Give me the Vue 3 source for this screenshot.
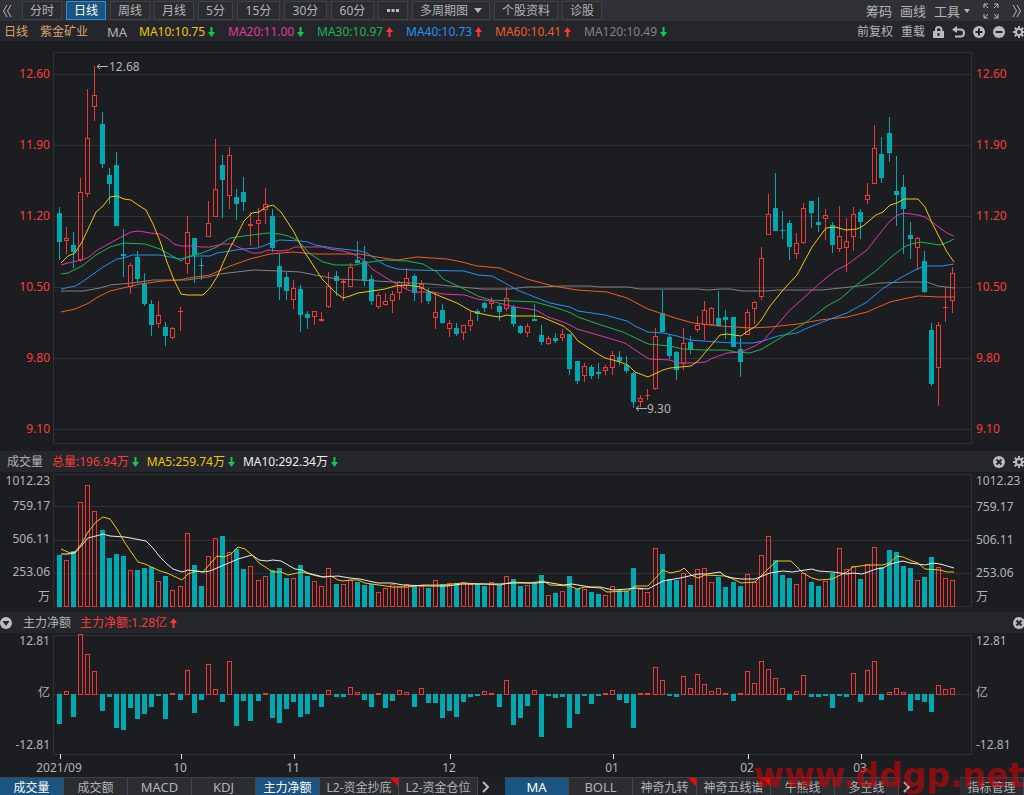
<script setup>
const periods = ['分时', '日线', '周线', '月线', '5分', '15分', '30分', '60分']

const averages = [
  { text: 'MA10:10.75', tone: 'yellow', up: false },
  { text: 'MA20:11.00', tone: 'pink', up: false },
  { text: 'MA30:10.97', tone: 'green', up: true },
  { text: 'MA40:10.73', tone: 'blue', up: true },
  { text: 'MA60:10.41', tone: 'orange', up: true },
  { text: 'MA120:10.49', tone: 'dim', up: false },
]

const volumeLegend = [
  { text: '总量:196.94万', tone: 'red', up: false },
  { text: 'MA5:259.74万', tone: 'yellow', up: false },
  { text: 'MA10:292.34万', tone: 'white', up: false },
]

const priceTicks = ['12.60', '11.90', '11.20', '10.50', '9.80', '9.10']
const priceGrid = [74, 145, 216, 287, 358, 429]
const volumeTicks = ['1012.23', '759.17', '506.11', '253.06', '万']
const volumeGrid = [506, 540, 573]
const flowTicks = ['12.81', '亿', '-12.81']

const months = [
  { text: '2021/09', x: 60, at: 59 },
  { text: '10', x: 181, at: 180 },
  { text: '11', x: 294, at: 293 },
  { text: '12', x: 450, at: 449 },
  { text: '01', x: 613, at: 612 },
  { text: '02', x: 748, at: 747 },
  { text: '03', x: 861, at: 860 },
]

const indicatorTabs = [
  { text: '成交量', on: true },
  { text: '成交额' },
  { text: 'MACD', latin: true },
  { text: 'KDJ', latin: true },
  { text: '主力净额', on: true },
  { text: 'L2-资金抄底', wide: true, hot: true },
  { text: 'L2-资金仓位', wide: true },
]
const overlayTabs = [
  { text: 'MA', latin: true, on: true },
  { text: 'BOLL', latin: true },
  { text: '神奇九转', hot: true },
  { text: '神奇五线谱', mid: true, hot: true },
  { text: '牛熊线' },
  { text: '多空线' },
]

// Each row: rising flag, then high, body top, body bottom, low
const candleRows = [
  [0,207,213,242,260],[1,227,238,241,254],[0,232,245,252,268],[1,178,192,260,262],[1,89,138,194,197],
  [1,66,95,107,121],[0,112,124,164,168],[0,168,175,184,204],[0,152,165,226,226],[0,229,254,256,277],
  [1,263,265,287,294],[0,251,257,279,283],[0,273,284,304,306],[0,300,304,325,336],[1,301,315,324,328],
  [0,322,327,336,346],[1,327,328,338,339],[1,307,311,312,331],[1,216,232,264,274],[0,238,238,255,283],
  [0,258,265,266,280],[1,201,223,237,237],[1,139,189,217,217],[0,155,165,180,218],[1,147,155,196,209],
  [0,189,197,204,220],[0,177,192,202,211],[1,212,224,226,246],[1,208,220,224,247],[1,188,204,210,224],
  [0,209,216,248,252],[0,254,266,287,300],[0,272,277,291,300],[1,280,288,300,309],[0,285,289,315,332],
  [0,311,314,318,329],[1,311,311,317,325],[1,312,319,321,322],[1,272,286,307,308],[0,271,276,281,296],
  [1,279,281,283,301],[1,263,267,287,287],[0,241,260,263,263],[0,246,261,281,286],[0,275,279,301,305],
  [1,293,295,307,309],[1,293,301,305,306],[1,291,294,301,313],[1,281,282,293,300],[1,268,278,286,289],
  [0,274,276,293,301],[1,280,284,289,303],[0,288,292,301,304],[1,293,312,318,329],[0,304,310,323,324],
  [1,320,323,329,337],[0,323,328,334,336],[1,325,325,333,340],[1,310,320,326,331],[0,309,311,314,321],
  [0,302,303,308,312],[1,297,301,304,309],[0,304,306,312,321],[1,287,298,309,311],[0,305,307,324,327],
  [0,325,326,333,334],[1,323,326,333,337],[0,304,319,321,321],[0,325,335,342,345],[1,336,338,344,345],
  [0,333,338,341,343],[1,329,334,338,341],[0,334,334,369,375],[0,361,361,381,384],[1,363,366,376,382],
  [0,365,367,376,379],[0,363,372,374,379],[1,365,367,371,375],[1,351,355,368,375],[0,351,357,361,365],
  [0,356,365,371,373],[0,372,373,402,408],[1,395,398,402,407],[1,389,395,396,400],[1,328,336,389,390],
  [0,290,313,332,332],[0,335,337,356,359],[0,351,352,370,380],[1,328,343,364,370],[0,336,342,350,354],
  [1,316,325,330,332],[1,301,310,325,340],[1,307,308,325,326],[0,291,318,326,327],[0,310,317,320,339],
  [0,317,317,347,347],[0,338,349,362,377],[1,309,312,335,335],[1,301,302,309,324],[1,247,258,297,300],
  [1,194,214,235,235],[0,173,208,231,231],[0,211,230,231,239],[0,220,223,247,260],[1,233,243,254,259],
  [1,203,208,243,244],[0,201,201,213,228],[0,197,222,225,232],[1,209,215,219,240],[0,222,225,245,253],
  [1,206,236,249,252],[1,218,241,248,272],[1,207,214,237,251],[0,209,212,222,239],[1,183,195,200,204],
  [1,125,148,184,184],[0,137,154,178,183],[0,117,133,153,162],[0,156,191,195,226],[0,175,187,209,254],
  [0,222,235,239,259],[1,237,238,248,270],[0,251,261,292,293],[0,323,330,384,386],[1,322,325,368,406],
  [1,287,307,308,322],[1,267,273,301,313],
]

const volumeTops = [
  555,560,551,502,485,511,530,558,554,556,570,570,568,567,581,576,590,586,533,565,586,556,538,536,552,
  549,569,566,580,576,570,568,578,578,565,576,581,586,568,584,584,580,582,585,584,592,588,584,586,584,
  586,586,588,580,584,583,583,582,584,584,586,582,585,576,579,586,585,583,575,595,593,591,576,589,589,
  592,594,595,586,590,591,568,589,592,548,554,579,580,573,585,569,568,582,577,587,582,586,574,582,555,
  536,560,575,578,584,573,582,586,581,573,548,569,566,579,564,547,567,550,552,566,568,580,577,557,567,
  578,580,
]

const flowEnds = [
  724,691,717,634,654,671,711,697,728,730,708,719,714,707,696,719,693,700,670,713,700,664,689,702,661,
  726,701,721,701,693,718,723,709,702,717,714,700,707,690,697,697,687,692,700,707,693,708,701,690,692,
  707,688,703,703,718,711,717,702,697,696,691,693,707,680,725,718,706,690,737,696,698,697,728,714,696,
  704,696,693,690,700,703,728,693,693,667,680,696,697,676,688,674,684,691,688,693,701,693,671,683,661,
  669,678,688,700,691,675,697,697,696,708,696,697,673,702,670,661,700,692,688,692,711,700,702,712,685,
  689,688,
]

const slot = (i) => Math.round(57 + i * 7.09)

const candles = candleRows.map(([up, high, top, bottom, low], i) => ({ up: !!up, high, top, bottom, low, x: slot(i) }))
const volumes = volumeTops.map((top, i) => ({ up: candles[i].up, top, x: slot(i) }))
const flows = flowEnds.map((end, i) => ({ up: end < 694, end, x: slot(i) }))

const priceLines = [
  { tone: 'dim', points: '61,291 83,291 100,288 110,285 132,283 153,280 187,280 208,277 220,274 253,270 280,271 300,272 320,276 337,279 360,280 393,282 430,284 460,287 483,289 510,289 527,287 540,287 562,286 590,286 600,287 628,287 640,289 698,289 707,290 720,289 730,289 742,291 767,291 777,290 822,290 850,287 880,283 907,282 927,282 938,286 954,288' },
  { tone: 'orange', points: '61,312 75,309 89,303 96,298 110,291 123,288 140,284 163,281 180,280 188,278 210,275 230,266 250,259 270,254 293,252 315,254 360,254 377,257 397,260 417,257 447,259 462,262 477,266 500,268 507,271 527,279 553,286 577,290 607,292 627,298 648,309 675,318 693,323 720,326 750,328 770,327 798,324 820,320 847,317 867,312 890,302 903,299 918,296 940,297 954,297' },
  { tone: 'blue', points: '61,289 75,286 82,282 103,267 117,259 124,258 132,255 160,255 180,259 193,256 210,256 217,253 243,249 258,248 273,242 280,240 300,241 308,242 315,245 333,248 360,251 367,253 380,262 387,266 398,269 413,270 464,271 478,275 492,276 505,283 517,290 550,303 570,307 578,311 605,315 627,321 635,326 648,332 663,333 677,336 690,340 703,341 718,342 733,343 753,343 763,341 778,336 790,334 797,333 805,329 833,318 847,313 867,302 882,289 900,278 917,269 925,266 942,266 954,264' },
  { tone: 'green', points: '61,274 68,273 82,266 96,255 110,247 124,243 145,244 160,249 167,253 181,261 187,257 202,253 217,247 230,238 244,236 268,233 280,234 288,236 297,240 302,245 310,254 323,262 335,265 355,265 363,263 385,260 407,261 423,264 437,272 443,279 460,287 478,296 490,300 513,301 535,302 550,306 563,310 571,313 578,317 598,324 623,332 648,344 670,346 683,349 703,350 727,350 735,352 750,353 762,349 777,340 805,323 827,306 840,299 855,286 877,270 890,258 904,247 911,244 920,242 940,245 948,242 954,239' },
  { tone: 'pink', points: '61,265 68,263 82,260 89,257 96,251 103,247 112,242 123,236 131,232 139,231 150,233 160,234 167,238 174,244 181,246 190,246 203,247 210,247 223,244 232,244 238,247 252,253 260,253 268,250 280,251 288,250 295,247 313,247 323,247 330,249 343,251 353,254 365,261 372,269 393,282 408,290 415,292 433,292 443,294 465,295 477,299 490,301 507,305 515,307 536,310 548,317 563,322 570,325 577,329 598,335 625,343 635,350 649,359 670,360 677,363 693,363 705,362 713,358 727,353 742,352 748,349 755,346 763,341 777,325 790,310 798,303 820,283 835,271 848,264 867,250 877,237 890,221 898,215 904,213 918,215 925,217 947,233 954,236' },
  { tone: 'yellow', points: '61,263 68,256 75,253 82,242 89,227 96,212 103,206 110,197 117,196 124,199 131,200 138,205 146,210 153,224 160,241 167,262 174,280 181,294 187,295 203,295 210,288 217,277 223,263 230,248 237,235 244,221 252,213 259,212 266,207 273,205 281,212 294,232 302,248 322,279 336,293 343,298 350,296 358,293 372,291 385,289 395,286 407,285 421,287 428,291 442,297 457,303 471,311 478,313 492,316 500,317 507,315 513,316 536,316 542,317 563,326 571,332 578,341 598,354 605,358 613,360 620,362 628,365 635,372 648,377 663,370 670,368 691,366 698,361 720,335 727,334 741,336 748,331 756,326 762,319 770,306 783,290 797,275 812,247 826,228 835,227 846,230 857,229 863,226 876,215 883,212 890,205 897,203 904,199 918,199 925,207 932,223 947,252 954,262' },
]

const volumeLines = [
  { tone: 'yellow', points: '61,549 70,553 75,552 82,543 88,532 96,522 103,517 110,519 117,529 125,543 138,562 145,564 160,571 167,573 182,580 188,574 197,571 203,572 217,556 224,557 231,554 238,547 245,549 252,555 259,563 273,572 281,572 288,575 302,572 317,576 323,577 331,576 338,580 343,581 350,580 358,580 365,583 393,587 408,587 423,585 443,585 462,583 483,584 500,585 513,582 530,583 543,581 550,585 570,586 577,589 585,587 600,588 607,592 628,591 635,586 648,586 663,570 670,573 680,571 684,568 691,575 698,578 705,575 725,576 733,579 741,583 755,582 762,575 770,567 777,561 791,561 803,573 812,578 819,580 832,579 847,572 853,567 868,565 883,565 889,563 897,556 903,557 912,561 918,563 925,569 940,570 947,572 954,572' },
  { tone: 'white', points: '61,554 68,554 75,553 88,538 96,536 103,534 110,536 125,537 146,541 153,548 160,557 167,564 173,569 182,572 188,570 203,572 210,571 238,559 252,555 259,560 267,561 273,560 281,561 295,569 302,570 308,573 323,577 338,576 350,578 360,579 378,583 392,583 403,585 430,586 447,586 462,584 500,584 513,583 537,583 545,582 563,585 572,584 590,587 600,587 613,590 628,589 635,588 648,589 663,581 680,578 698,574 707,574 720,572 725,576 733,578 741,579 755,579 770,573 783,571 792,572 812,569 818,571 833,572 847,574 853,573 862,574 868,572 876,569 883,568 890,564 903,561 910,563 925,565 933,563 940,564 947,566 954,568' },
]

const gearTeeth = [0, 45, 90, 135, 180, 225, 270, 315]
</script>

<template>
  <main class="terminal">
    <nav class="toolbar" aria-label="周期">
      <button class="bare" aria-label="向左">
        <svg width="10" height="14" viewBox="0 0 10 14"><path d="M5 1 1.500 7 5 13M9 1 5.500 7 9 13" /></svg>
      </button>
      <div class="periods">
        <button v-for="p in periods" :key="p" class="period" :class="{ on: p === '日线', minutes: p.length === 3 }">{{ p }}</button>
        <button class="period dots" aria-label="更多">
          <svg width="14" height="3" viewBox="0 0 14 3"><path class="solid" d="M1 0h3v3H1zM5.500 0h3v3h-3zM10 0h3v3h-3z" /></svg>
        </button>
        <button class="period menu">多周期图 <i class="caret"></i></button>
        <button class="period">个股资料</button>
        <button class="period">诊股</button>
      </div>
      <div class="tools">
        <button class="bare">筹码</button>
        <button class="bare">画线</button>
        <button class="bare menu">工具 <i class="caret small"></i></button>
        <button class="bare expand" aria-label="全屏">
          <svg width="16" height="16" viewBox="0 0 16 16"><path d="M1 5V1h4M1 1l4 4M11 1h4v4M15 1l-4 4M1 11v4h4M1 15l4-4M15 11v4h-4M15 15l-4-4" /></svg>
        </button>
        <button class="bare" aria-label="向右">
          <svg width="10" height="14" viewBox="0 0 10 14"><path d="M1 1 4.500 7 1 13M5 1l3.500 6L5 13" /></svg>
        </button>
      </div>
    </nav>

    <header class="legend main-legend">
      <span class="stock">日线</span>
      <span class="stock name">紫金矿业</span>
      <span class="ma">MA</span>
      <span v-for="a in averages" :key="a.text" class="value" :class="a.tone">{{ a.text }}<svg class="arrow" :class="{ up: a.up }" width="7" height="10" viewBox="0 0 7 10"><path d="M2.500 0h2v5H7L3.500 10 0 5h2.500z" /></svg></span>
      <div class="actions">
        <button class="bare">前复权</button>
        <button class="bare">重载</button>
        <button class="bare" aria-label="锁定">
          <svg width="11" height="12" viewBox="0 0 11 12"><path class="solid" fill-rule="evenodd" d="M0 5h11v7H0zM4.500 7v3h2V7z" /><path class="thick" d="M3 5V3.500Q3 1 5.500 1T8.500 3.500V5" /></svg>
        </button>
        <button class="bare" aria-label="撤销">
          <svg width="13" height="12" viewBox="0 0 13 12"><path class="solid" d="M0 3.500 5 0v7z" /><path class="thick" d="M4 3.500h4.500Q12 3.500 12 7T8.500 10.500H3" /></svg>
        </button>
        <button class="bare" aria-label="放大">
          <svg width="12" height="12" viewBox="0 0 12 12"><circle class="disc" cx="6" cy="6" r="6" /><path class="cut" d="M6 2.500v7M2.500 6h7" /></svg>
        </button>
        <button class="bare" aria-label="缩小">
          <svg width="12" height="12" viewBox="0 0 12 12"><circle class="disc" cx="6" cy="6" r="6" /><path class="cut" d="M2.500 6h7" /></svg>
        </button>
        <button class="bare gear" aria-label="设置">
          <svg width="12" height="12" viewBox="0 0 12 12"><circle class="ring" cx="6" cy="6" r="3" /><path v-for="t in gearTeeth" :key="t" class="tooth" d="M6 0v2.500" :transform="`rotate(${t} 6 6)`" /></svg>
        </button>
      </div>
    </header>

    <section class="panel" aria-label="K线图">
      <div class="axis left price"><span v-for="t in priceTicks" :key="t">{{ t }}</span></div>
      <svg class="plot" viewBox="53 41 919 410">
        <path class="grid" d="M53.500 52.500h918v391h-918z" />
        <path v-for="y in priceGrid" :key="y" class="grid" :d="`M53 ${y + 0.5}h919`" />
        <g v-for="c in candles" :key="c.x" :class="c.up ? 'rise' : 'fall'">
          <path v-if="c.high < c.top" :d="`M${c.x + 2.5} ${c.high}V${c.top}`" />
          <path v-if="c.low > c.bottom" :d="`M${c.x + 2.5} ${c.bottom}V${c.low}`" />
          <rect v-if="c.bottom - c.top > 1" :x="c.x + 0.5" :y="c.top + 0.5" width="4" :height="c.bottom - c.top - 1" />
          <path v-else :d="`M${c.x} ${c.top + 0.5}h5`" />
        </g>
        <polyline v-for="l in priceLines" :key="l.tone" class="line" :class="l.tone" :points="l.points" />
        <path class="pointer" d="M97 66.500h11M100 64l-3 2.500 3 2.500M636 408.500h11M639 406l-3 2.500 3 2.500" />
        <text class="note" x="109" y="71">12.68</text>
        <text class="note" x="647" y="413">9.30</text>
      </svg>
      <div class="axis right price"><span v-for="t in priceTicks" :key="t">{{ t }}</span></div>
    </section>

    <header class="legend">
      <span class="title">成交量</span>
      <span v-for="a in volumeLegend" :key="a.text" class="pair" :class="a.tone">{{ a.text }}<svg class="arrow" width="7" height="10" viewBox="0 0 7 10"><path d="M2.500 0h2v5H7L3.500 10 0 5h2.500z" /></svg></span>
      <div class="actions">
        <button class="bare" aria-label="关闭成交量">
          <svg width="12" height="12" viewBox="0 0 12 12"><circle class="disc" cx="6" cy="6" r="6" /><path class="cut" d="m3.500 3.500 5 5M8.500 3.500l-5 5" /></svg>
        </button>
        <button class="bare gear" aria-label="成交量设置">
          <svg width="12" height="12" viewBox="0 0 12 12"><circle class="ring" cx="6" cy="6" r="3" /><path v-for="t in gearTeeth" :key="t" class="tooth" d="M6 0v2.500" :transform="`rotate(${t} 6 6)`" /></svg>
        </button>
      </div>
    </header>

    <section class="panel" aria-label="成交量">
      <div class="axis left volume"><span v-for="t in volumeTicks" :key="t">{{ t }}</span></div>
      <svg class="plot" viewBox="53 472 919 140">
        <path class="grid" d="M53.500 474.500h918v132h-918z" />
        <path v-for="y in volumeGrid" :key="y" class="grid" :d="`M53 ${y + 0.5}h919`" />
        <rect v-for="v in volumes" :key="v.x" :class="v.up ? 'rise' : 'fall'" :x="v.x + 0.5" :y="v.top + 0.5" width="4" :height="606 - v.top" />
        <polyline v-for="l in volumeLines" :key="l.tone" class="line" :class="l.tone" :points="l.points" />
      </svg>
      <div class="axis right volume"><span v-for="t in volumeTicks" :key="t">{{ t }}</span></div>
    </section>

    <header class="legend flow-legend">
      <button class="bare" aria-label="选择指标">
        <svg width="12" height="12" viewBox="0 0 12 12"><circle class="disc" cx="6" cy="6" r="6" /><path class="hole" d="M2.500 4h7L6 9z" /></svg>
      </button>
      <span class="title">主力净额</span>
      <span class="pair red">主力净额:1.28亿<svg class="arrow up" width="7" height="10" viewBox="0 0 7 10"><path d="M2.500 0h2v5H7L3.500 10 0 5h2.500z" /></svg></span>
      <div class="actions">
        <button class="bare gear" aria-label="关闭主力净额">
          <svg width="12" height="12" viewBox="0 0 12 12"><circle class="disc" cx="6" cy="6" r="6" /><path class="cut" d="m3.500 3.500 5 5M8.500 3.500l-5 5" /></svg>
        </button>
      </div>
    </header>

    <section class="panel" aria-label="主力净额">
      <div class="axis left flow"><span v-for="t in flowTicks" :key="t">{{ t }}</span></div>
      <svg class="plot" viewBox="53 633 919 144">
        <path class="grid" d="M53.500 635.500h918v119h-918zM53 694.500h919" />
        <rect v-for="f in flows" :key="f.x" :class="f.up ? 'rise' : 'fall'" :x="f.x + 0.5" :y="f.up ? f.end + 0.5 : 694.5" width="4" :height="f.up ? 694 - f.end : f.end - 695" />
        <g v-for="m in months" :key="m.text">
          <path class="tick" :d="`M${m.x + 0.5} 754v5`" />
          <text class="note month" :x="m.at" y="772">{{ m.text }}</text>
        </g>
      </svg>
      <div class="axis right flow"><span v-for="t in flowTicks" :key="t">{{ t }}</span></div>
    </section>

    <nav class="tabs" aria-label="指标">
      <div class="group">
        <button v-for="t in indicatorTabs" :key="t.text" class="tab" :class="{ on: t.on, latin: t.latin, wide: t.wide, hot: t.hot }">{{ t.text }}</button>
      </div>
      <button class="bare next" aria-label="更多指标">
        <svg width="8" height="12" viewBox="0 0 8 12"><path class="thick" d="m1 1 5 5-5 5" /></svg>
      </button>
      <div class="group">
        <button v-for="t in overlayTabs" :key="t.text" class="tab" :class="{ on: t.on, latin: t.latin, mid: t.mid, hot: t.hot }">{{ t.text }}</button>
      </div>
      <button class="bare next" aria-label="更多主图指标">
        <svg width="8" height="12" viewBox="0 0 8 12"><path class="thick" d="m1 1 5 5-5 5" /></svg>
      </button>
      <button class="tab manage">指标管理</button>
    </nav>
    <div class="watermark">www.ddgp.net</div>
  </main>
</template>

<style>
body {
  background: #1c1d21;
}
</style>

<style scoped>
.terminal {
  position: relative;
  overflow: hidden;
  background: #1c1d21;
  color: #b2b3b6;
  font: 12px/18px "Noto Sans", "Noto Sans CJK SC", sans-serif;
  white-space: nowrap;
}
button {
  margin: 0;
  padding: 0;
  border: 0;
  background: none;
  color: inherit;
  font: inherit;
  cursor: pointer;
}
svg {
  display: block;
  fill: none;
}
.bare svg {
  stroke: #b9babd;
}
.bare .solid, .period .solid, .bare .disc {
  fill: #bbbcbf;
  stroke: none;
}
.bare .thick, .bare .ring {
  stroke-width: 2;
}
.bare .tooth {
  stroke-width: 2;
}
.bare .cut {
  stroke: #25262b;
  stroke-width: 2;
}
.bare .hole {
  fill: #25262b;
  stroke: none;
}
.bare {
  flex: none;
}

.toolbar {
  display: flex;
  align-items: center;
  height: 21px;
  padding-left: 2px;
  background: #303136;
}
.periods {
  display: flex;
  gap: 4px;
  margin-left: 10px;
}
.period {
  display: flex;
  align-items: center;
  justify-content: center;
  height: 19px;
  padding: 0 7px;
  border: 1px solid #404146;
  background: #2b2c30;
  line-height: 17px;
}
.period.minutes {
  min-width: 43px;
}
.period.on {
  border-color: #2190e6;
  background: #1b5480;
  color: #fff;
}
.menu {
  display: flex;
  align-items: center;
  gap: 6px;
}
.caret {
  border: 4px solid transparent;
  border-top: 5px solid #b2b3b6;
  border-bottom: 0;
}
.caret.small {
  border-width: 4px 3px 0;
}
.toolbar .bare.menu {
  gap: 4px;
}
.tools {
  display: flex;
  align-items: center;
  gap: 8px;
  margin-left: auto;
  padding-right: 2px;
  font-size: 13px;
}
.expand {
  margin: 0 5px;
}

.legend {
  display: flex;
  align-items: center;
  height: 21px;
  padding-left: 7px;
  background: #25262b;
}
.main-legend {
  box-sizing: border-box;
  height: 20px;
  padding-top: 2px;
  padding-left: 4px;
}
.stock {
  color: #dca36c;
}
.name {
  margin: 0 19px 0 12px;
}
.ma {
  width: 32px;
  font-size: 13px;
}
.value, .pair {
  display: flex;
  align-items: center;
  gap: 3px;
}
.value {
  width: 89px;
}
.title {
  margin-right: 9px;
}
.pair {
  margin-right: 8px;
}
.arrow {
  fill: #10c850;
}
.arrow.up {
  fill: #ff3434;
  transform: rotate(180deg);
}
.actions {
  display: flex;
  align-items: center;
  gap: 8px;
  margin-left: auto;
}
.actions .gear {
  margin-right: -1px;
}
.flow-legend {
  padding-left: 0;
}
.flow-legend .title {
  margin-left: 11px;
}

.yellow { color: #f0c800; }
.pink { color: #e035a6; }
.green { color: #14b850; }
.blue { color: #1e94f2; }
.orange { color: #f25a20; }
.dim { color: #808184; }
.white { color: #ececec; }
.red { color: #fa3c38; }

.panel {
  display: grid;
  grid-template-columns: 53px minmax(0, 1fr) 52px;
}
.plot {
  width: 100%;
  height: auto;
  overflow: visible;
}
.axis {
  display: flex;
  flex-direction: column;
  justify-content: space-between;
}
.left {
  padding-right: 3px;
  text-align: right;
}
.right {
  padding-left: 4px;
}
.price {
  padding-top: 24px;
  padding-bottom: 13px;
  color: #fa3c38;
}
.volume {
  display: grid;
  grid-template-rows: 17px 33px 33px 33px 18px;
  align-content: start;
  align-items: center;
  justify-content: stretch;
}
.right.volume {
  grid-template-rows: 17px 35px 32px 34px 14px;
}
.flow {
  padding-bottom: 24px;
  line-height: 16px;
}

.grid {
  stroke: #303136;
}
.rise {
  stroke: #ee3835;
}
.fall {
  fill: #00a8b0;
  stroke: #00a8b0;
}
.line {
  stroke: currentColor;
  stroke-width: 1;
  stroke-linejoin: round;
}
.pointer {
  stroke: #b2b3b6;
}
.tick {
  stroke: #e8e8e8;
}
.note {
  fill: #b2b3b6;
  font-size: 12px;
}
.month {
  text-anchor: middle;
}

.tabs {
  display: flex;
  height: 18px;
  overflow: hidden;
  background: #1f2024;
}
.group {
  display: flex;
}
.tab {
  position: relative;
  flex: none;
  box-sizing: border-box;
  width: 64px;
  height: 20px;
  border-top: 1px solid #404146;
  border-right: 1px solid #46474b;
  background: #2c2d31;
  line-height: 19px;
}
.tab.on {
  background: #1b5480;
  color: #fff;
}
.tab.wide {
  width: 79px;
}
.tab.mid {
  width: 74px;
}
.latin {
  font-size: 13px;
}
.hot::after {
  position: absolute;
  top: 0;
  right: 0;
  border-top: 8px solid #f00;
  border-left: 8px solid transparent;
  content: "";
}
.next {
  display: flex;
  align-items: center;
  width: 27px;
  height: 20px;
  padding-left: 4px;
}
.manage {
  margin-left: auto;
}
.watermark {
  position: absolute;
  right: 0;
  bottom: 0;
  color: rgba(190, 5, 10, 0.68);
  font: bold 33px/38px "DejaVu Sans", sans-serif;
  pointer-events: none;
}
</style>
